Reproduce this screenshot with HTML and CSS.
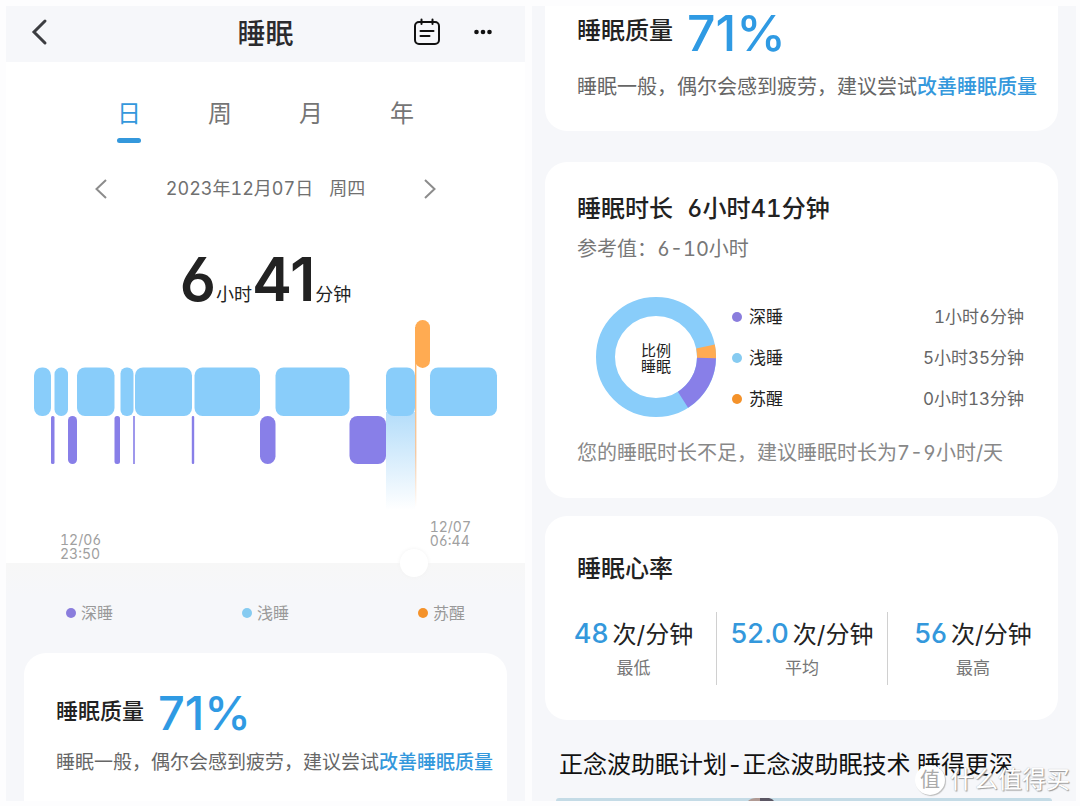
FILE: index.html
```html
<!DOCTYPE html>
<html lang="zh-CN">
<head>
<meta charset="utf-8">
<meta name="viewport" content="width=device-width, initial-scale=1">
<title>睡眠</title>
<link rel="stylesheet" href="styles.css">
</head>
<body>
<main class="screens">
  <section class="screen screen-day">
    <header class="topbar">
      <button class="icon-btn" aria-label="返回"><svg width="18" height="28" viewBox="0 0 18 28"><path d="M15 3 4 14l11 11" fill="none" stroke="#3c3d41" stroke-width="3" stroke-linecap="round"/></svg></button>
      <h1 class="topbar-title">睡眠</h1>
      <div class="topbar-actions">
        <button class="icon-btn" aria-label="日历"><svg width="28" height="28" viewBox="0 0 28 28" fill="none" stroke="#111" stroke-width="2" stroke-linecap="round"><rect x="2" y="4" width="24" height="22" rx="4"/><path d="M8.500 1.500v4.500M19.500 1.500v4.500M7.500 13h13M7.500 18h9"/></svg></button>
        <button class="icon-btn" aria-label="更多"><svg width="20" height="28" viewBox="0 0 20 28" fill="#111"><circle cx="3.500" cy="14" r="2.300"/><circle cx="10" cy="14" r="2.300"/><circle cx="16.500" cy="14" r="2.300"/></svg></button>
      </div>
    </header>

    <div class="day-body">
      <nav class="tabs">
        <button class="tab tab-active">日</button>
        <button class="tab">周</button>
        <button class="tab">月</button>
        <button class="tab">年</button>
      </nav>
      <div class="datebar">
        <button class="icon-btn" aria-label="前一天"><svg width="14" height="22" viewBox="0 0 14 22"><path d="M12 2 2.500 11l9.500 9" fill="none" stroke="#8c8c8c" stroke-width="2"/></svg></button>
        <p class="date"><span>2023年12月07日</span><span>周四</span></p>
        <button class="icon-btn" aria-label="后一天"><svg width="14" height="22" viewBox="0 0 14 22"><path d="m2 2 9.500 9L2 20" fill="none" stroke="#8c8c8c" stroke-width="2"/></svg></button>
      </div>
      <p class="total"><b>6</b>小时<b>41</b>分钟</p>
      <svg class="chart" viewBox="0 0 519 200" role="img" aria-label="睡眠阶段">
        <defs>
          <linearGradient id="fade" x1="0" y1="0" x2="0" y2="1"><stop offset="0" stop-color="#b4ddfa"/><stop offset="1" stop-color="#fff"/></linearGradient>
          <linearGradient id="cursor" x1="0" y1="0" x2="0" y2="1"><stop offset="0" stop-color="#ffab52"/><stop offset=".7" stop-color="#f3c9a4"/><stop offset="1" stop-color="#fff"/></linearGradient>
        </defs>
        <rect x="380" y="93" width="29" height="98" fill="url(#fade)"/>
        <g fill="#89cdfa">
          <rect x="28" y="48.500" width="17" height="48.500" rx="8"/>
          <rect x="48.500" y="48.500" width="13.500" height="48.500" rx="6.500"/>
          <rect x="71" y="48.500" width="37.500" height="48.500" rx="8"/>
          <rect x="114.500" y="48.500" width="13" height="48.500" rx="6"/>
          <rect x="129" y="48.500" width="57" height="48.500" rx="8"/>
          <rect x="188.500" y="48.500" width="65.500" height="48.500" rx="8"/>
          <rect x="269.500" y="48.500" width="74" height="48.500" rx="8"/>
          <rect x="380" y="48.500" width="29" height="48.500" rx="8"/>
          <rect x="424" y="48.500" width="67" height="48.500" rx="8"/>
        </g>
        <g fill="#887fe8">
          <rect x="45" y="97" width="3.500" height="48" rx="1.500"/>
          <rect x="62" y="97" width="9" height="48" rx="4.500"/>
          <rect x="108.500" y="97" width="5.500" height="48" rx="2.500"/>
          <rect x="127.200" y="97" width="1.600" height="48"/>
          <rect x="185.800" y="97" width="2.400" height="48" rx="1"/>
          <rect x="254" y="97" width="15.500" height="48" rx="7.700"/>
          <rect x="343.500" y="97" width="36.500" height="48" rx="8"/>
        </g>
        <rect x="409" y="8" width="1.400" height="180" fill="url(#cursor)"/>
        <rect x="409.300" y="1" width="14.700" height="48" rx="7.300" fill="#ffab52"/>
      </svg>
      <div class="axis">
        <time class="axis-label axis-start">12/06<br>23:50</time>
        <time class="axis-label">12/07<br>06:44</time>
      </div>
    </div>

    <div class="slider"><span class="knob"></span></div>
    <ul class="legend">
      <li><i class="dot deep"></i>深睡</li>
      <li><i class="dot light"></i>浅睡</li>
      <li><i class="dot awake"></i>苏醒</li>
    </ul>
    <article class="quality quality-day">
      <h2 class="quality-head">睡眠质量<strong>71%</strong></h2>
      <p class="quality-text">睡眠一般，偶尔会感到疲劳，建议尝试<a href="#">改善睡眠质量</a></p>
    </article>
  </section>

  <section class="screen screen-detail">
    <article class="quality quality-detail">
      <h2 class="quality-head">睡眠质量<strong>71%</strong></h2>
      <p class="quality-text">睡眠一般，偶尔会感到疲劳，建议尝试<a href="#">改善睡眠质量</a></p>
    </article>

    <article class="card duration">
      <h2 class="card-title"><span>睡眠时长</span><span>6小时41分钟</span></h2>
      <p class="reference">参考值：6-10小时</p>
      <div class="ratio">
        <div class="donut">
          <svg width="120" height="120" viewBox="0 0 120 120" fill="none" stroke-width="19">
            <circle cx="60" cy="60" r="50.500" stroke="#89cdfa"/>
            <path d="M110.500 60A50.500 50.500 0 0 1 87 102.800" stroke="#887fe8"/>
            <path d="M109.500 49.500A50.500 50.500 0 0 1 110.500 61" stroke="#ffab52"/>
          </svg>
          <p class="donut-label">比例<br>睡眠</p>
        </div>
        <dl class="stages">
          <div><dt><i class="dot deep"></i>深睡</dt><dd>1小时6分钟</dd></div>
          <div><dt><i class="dot light"></i>浅睡</dt><dd>5小时35分钟</dd></div>
          <div><dt><i class="dot awake"></i>苏醒</dt><dd>0小时13分钟</dd></div>
        </dl>
      </div>
      <p class="advice">您的睡眠时长不足，建议睡眠时长为7-9小时/天</p>
    </article>

    <article class="card heart">
      <h2 class="card-title">睡眠心率</h2>
      <div class="rates">
        <div class="rate"><p class="rate-value"><b>48</b>次/分钟</p><p class="rate-name">最低</p></div>
        <div class="rate"><p class="rate-value"><b>52.0</b>次/分钟</p><p class="rate-name">平均</p></div>
        <div class="rate"><p class="rate-value"><b>56</b>次/分钟</p><p class="rate-name">最高</p></div>
      </div>
    </article>

    <h2 class="plan-title">正念波助眠计划-正念波助眠技术 睡得更深</h2>
    <div class="plan-cover"><svg width="26" height="3" viewBox="0 0 26 3"><path d="M0 3Q3 0 8 0h6v3z" fill="#b09a94"/><path d="M12 3V0h9q4 1 5 3z" fill="#5b5663"/></svg></div>
  </section>
</main>
<div class="watermark"><span class="watermark-badge">值</span><span>什么值得买</span></div>
</body>
</html>
```

FILE: styles.css
```css
* { box-sizing: border-box; }

body {
  margin: 0;
  position: relative;
  background: #fdfdfe;
  color: #222;
  font-family: Inter, "Noto Sans CJK SC", sans-serif;
  font-feature-settings: "cv03", "cv04", "tnum";
}

h1, h2, p, ul, dl, dd { margin: 0; padding: 0; font-weight: 400; }
ul { list-style: none; }
button { border: 0; padding: 0; background: none; font: inherit; color: inherit; cursor: pointer; }
svg { display: block; }
a { color: #3498dc; font-weight: 500; text-decoration: none; }

.screens {
  display: grid;
  grid-template-columns: 519fr 544fr;
  gap: 7px;
  padding: 6px 4px 5px 6px;
}
.screen { background: #f6f7fa; overflow: hidden; min-width: 0; }
.screen-day { display: flex; flex-direction: column; }

.topbar {
  display: grid;
  grid-template-columns: 1fr auto 1fr;
  align-items: center;
  height: 56px;
  padding: 0 32px 4px 24px;
}
.topbar-title { font-size: 28px; line-height: 40px; font-weight: 500; padding: 3px 0 0 8px; color: #2b2b2e; }
.topbar-actions { display: flex; justify-content: flex-end; gap: 32px; }

.day-body { background: #fff; padding-top: 33px; }
.tabs { display: flex; justify-content: center; gap: 67px; }
.tab {
  display: flex;
  flex-direction: column;
  align-items: center;
  width: 24px;
  font-size: 24px;
  line-height: 38px;
  color: #757575;
}
.tab::after { content: ""; width: 24px; height: 5px; border-radius: 3px; margin-top: 5px; }
.tab-active { color: #3498dc; }
.tab-active::after { background: #3498dc; }

.datebar {
  display: flex;
  align-items: center;
  justify-content: space-between;
  padding: 32px 88px 0;
  color: #707070;
}
.date { display: flex; gap: 16px; font-size: 18px; line-height: 28px; }

.total {
  display: flex;
  align-items: baseline;
  justify-content: center;
  margin-top: 52px;
  font-size: 18px;
  line-height: 48px;
}
.total b { font-size: 60px; font-weight: 600; font-feature-settings: "cv03"; }

.chart { width: 100%; height: auto; }
.axis { display: flex; justify-content: space-between; padding: 1px 54px 2px; }
.axis-label { font-size: 14px; line-height: 14px; color: #a0a0a0; }
.axis-start { padding-top: 13px; }

.slider {
  position: relative;
  height: 32px;
  background: linear-gradient(#f7f7f7, #f6f7fa);
}
.knob {
  position: absolute;
  left: 76%;
  top: -14px;
  width: 28px;
  height: 28px;
  border-radius: 50%;
  background: #fff;
  box-shadow: 0 0 4px #f2f2f2;
}

.legend { display: flex; justify-content: space-between; padding: 6px 60px 28px; }
.legend li { display: flex; align-items: center; gap: 5px; font-size: 16px; line-height: 24px; color: #999; }
.dot { width: 10px; height: 10px; border-radius: 50%; flex: none; }
.deep { background: #8a7ddd; }
.light { background: #86cbf1; }
.awake { background: #f4922a; }

.quality { background: #fff; }
.quality-head { display: flex; font-weight: 500; }
.quality-head strong { font-weight: 500; color: #2f9ae3; font-feature-settings: normal; }
.quality-text { color: #666; white-space: nowrap; }
.quality-day {
  flex: 1;
  margin: 0 18px;
  padding: 28px 0 19px 32px;
  border-radius: 22px 22px 0 0;
}
.quality-day .quality-head { gap: 14px; font-size: 22px; line-height: 60px; }
.quality-day .quality-head strong { font-size: 47px; line-height: 64px; }
.quality-day .quality-text { font-size: 19px; line-height: 36px; }

.quality-detail, .card { margin: 0 18px 0 13px; }
.quality-detail { padding: 0 0 28px 32px; border-radius: 0 0 22px 22px; }
.quality-detail .quality-head { gap: 14px; font-size: 24px; line-height: 50px; }
.quality-detail .quality-head strong { font-size: 50px; line-height: 54px; }
.quality-detail .quality-text { font-size: 20px; line-height: 28px; padding: 13px 0 2px; }

.card { background: #fff; border-radius: 22px; }
.card-title { display: flex; gap: 14px; font-size: 24px; line-height: 36px; font-weight: 500; padding-left: 32px; }
.duration { margin-top: 31px; padding: 29px 0 30px; }
.reference { padding-left: 32px; margin-top: 7px; font-size: 20px; line-height: 30px; color: #777; }
.ratio { display: flex; align-items: center; gap: 16px; padding: 33px 34px 0 51px; }
.donut { position: relative; flex: none; }
.donut-label {
  position: absolute;
  inset: 0;
  display: grid;
  place-content: center;
  padding-top: 4px;
  font-size: 15px;
  line-height: 16px;
}
.stages { flex: 1; display: grid; gap: 13px; padding-top: 2px; font-size: 17px; line-height: 28px; }
.stages div { display: flex; justify-content: space-between; }
.stages dt { display: flex; align-items: center; gap: 7px; }
.stages dd { color: #666; }
.advice { padding-left: 32px; margin-top: 21px; font-size: 20px; line-height: 30px; color: #888; }

.heart { margin-top: 18px; padding: 35px 0 35px; }
.rates { display: grid; grid-template-columns: repeat(3, 1fr); margin-top: 25px; }
.rate { text-align: center; padding: 4px 0 2px; white-space: nowrap; }
.rate:first-child { padding-left: 6px; }
.rate + .rate { border-left: 1px solid #d0d0d0; }
.rate-value { font-size: 24px; line-height: 36px; }
.rate-value b { font-size: 27px; font-weight: 500; color: #3498dc; margin-right: 4px; font-feature-settings: "cv03"; }
.rate-name { font-size: 17px; line-height: 30px; color: #777; }

.plan-title { margin-top: 27px; padding-left: 27px; font-size: 24px; line-height: 36px; color: #111; white-space: nowrap; }
.plan-cover { margin: 15px 24px 0; padding-left: 192px; height: 3px; background: #c4dbe6; border-radius: 8px 8px 0 0; }

.watermark {
  position: absolute;
  right: 10px;
  bottom: 8px;
  display: flex;
  align-items: center;
  gap: 5px;
  font-size: 24px;
  line-height: 36px;
  color: #fff;
  text-shadow: 1px 1px 1px #999, 0 0 1px #aaa;
}
.watermark-badge {
  display: grid;
  place-content: center;
  width: 30px;
  height: 30px;
  border-radius: 50%;
  background: #fff;
  box-shadow: 1px 1px 1px #bbb;
  color: #aaa;
  font-size: 20px;
  text-shadow: none;
}
```
